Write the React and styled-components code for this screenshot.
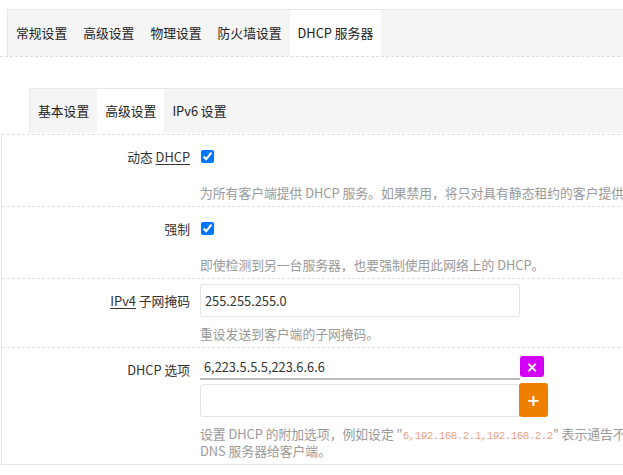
import React from "react";
import styled, { createGlobalStyle } from "styled-components";

const GlobalStyle = createGlobalStyle`
  html, body {
    margin: 0;
    padding: 0;
    overflow: hidden;
    background: #fff;
  }
  body {
    font-family: "Noto Sans CJK SC", "Noto Sans", sans-serif;
    font-size: 12.8px;
    color: #333;
  }
`;

const topTabs = ["常规设置", "高级设置", "物理设置", "防火墙设置", "DHCP 服务器"];
const subTabs = ["基本设置", "高级设置", "IPv6 设置"];

export default function App() {
  return (
    <>
      <GlobalStyle />
      <StyledPage>
        <StyledTopSection>
          <StyledTabBar>
            {topTabs.map((name, i) => (
              <StyledTab key={name} $active={i === topTabs.length - 1} $height={46}>
                {name}
              </StyledTab>
            ))}
          </StyledTabBar>
        </StyledTopSection>

        <StyledSubSection>
          <StyledTabBar>
            {subTabs.map((name, i) => (
              <StyledTab key={name} $active={i === 1} $height={44}>
                {name}
              </StyledTab>
            ))}
          </StyledTabBar>
        </StyledSubSection>

        <StyledPanel>
          <StyledRow>
            <StyledLabel>
              动态 <StyledAbbr>DHCP</StyledAbbr>
            </StyledLabel>
            <StyledField>
              <StyledCheckArea>
                <StyledCheckbox type="checkbox" defaultChecked />
              </StyledCheckArea>
              <StyledHelp $nowrap>
                为所有客户端提供 DHCP 服务。如果禁用，将只对具有静态租约的客户提供服务。
              </StyledHelp>
            </StyledField>
          </StyledRow>

          <StyledRow>
            <StyledLabel>强制</StyledLabel>
            <StyledField>
              <StyledCheckArea>
                <StyledCheckbox type="checkbox" defaultChecked />
              </StyledCheckArea>
              <StyledHelp>即使检测到另一台服务器，也要强制使用此网络上的 DHCP。</StyledHelp>
            </StyledField>
          </StyledRow>

          <StyledRow>
            <StyledLabel>
              <StyledAbbr>IPv4</StyledAbbr> 子网掩码
            </StyledLabel>
            <StyledField>
              <StyledInput defaultValue="255.255.255.0" />
              <StyledHelp>重设发送到客户端的子网掩码。</StyledHelp>
            </StyledField>
          </StyledRow>

          <StyledRow>
            <StyledLabel>DHCP 选项</StyledLabel>
            <StyledField>
              <StyledDynItem>
                <StyledDynValue defaultValue="6,223.5.5.5,223.6.6.6" />
                <StyledRemoveButton>×</StyledRemoveButton>
              </StyledDynItem>
              <StyledDynAdd>
                <StyledInput />
                <StyledAddButton>+</StyledAddButton>
              </StyledDynAdd>
              <StyledHelp>
                设置 DHCP 的附加选项，例如设定 "<StyledCode>6,192.168.2.1,192.168.2.2</StyledCode>"
                表示通告不同的 DNS 服务器给客户端。
              </StyledHelp>
            </StyledField>
          </StyledRow>
        </StyledPanel>
      </StyledPage>
    </>
  );
}

const StyledPage = styled.div`
  width: 720px;
`;

const StyledTopSection = styled.div`
  padding: 9px 0 0 7px;
  border-bottom: 1px dashed #ddd;
`;

const StyledSubSection = styled.div`
  padding: 31px 0 0 29px;
`;

const StyledTabBar = styled.div`
  display: flex;
  background: #f5f5f5;
  border-top: 1px solid #e6e6e6;
  border-left: 1px solid #e6e6e6;
`;

const StyledTab = styled.div`
  padding: 0 8px;
  line-height: ${(p) => p.$height}px;
  color: #222;
  white-space: nowrap;
  background: ${(p) => (p.$active ? "#fff" : "transparent")};
`;

const StyledPanel = styled.div`
  margin: 1px 0 0 1px;
  border-left: 1px solid #e3e6e9;
  border-bottom: 1px solid #e3e6e9;
`;

const StyledRow = styled.div`
  display: flex;
  padding: 5px 0;
  border-top: 1px dashed #e0e0e0;
`;

const StyledLabel = styled.div`
  width: 188px;
  margin-right: 10px;
  text-align: right;
  line-height: 33px;
  color: #333;
  white-space: nowrap;
`;

const StyledAbbr = styled.span`
  text-decoration: underline;
  text-underline-offset: 2px;
`;

const StyledField = styled.div`
  display: flex;
  flex-direction: column;
  width: 468px;
`;

const StyledCheckArea = styled.div`
  display: flex;
  height: 36px;
  padding-top: 10px;
  box-sizing: border-box;
`;

const StyledCheckbox = styled.input`
  width: 13px;
  height: 13px;
  margin: 0 0 0 1px;
  accent-color: #0075ff;
`;

const StyledInput = styled.input`
  box-sizing: border-box;
  width: 320px;
  height: 33px;
  padding: 0 4px;
  border: 1px solid #e4e4e4;
  border-radius: 3px;
  font: inherit;
  color: #333;
  outline: none;
`;

const StyledHelp = styled.div`
  margin-top: 8px;
  line-height: 17px;
  color: #999;
  white-space: ${(p) => (p.$nowrap ? "nowrap" : "normal")};
`;

const StyledCode = styled.code`
  font-family: "Liberation Mono", monospace;
  font-size: 11px;
  line-height: 1;
  letter-spacing: -0.6px;
  color: #f0a07c;
`;

const StyledDynItem = styled.div`
  display: flex;
  align-items: flex-start;
`;

const StyledDynValue = styled.input`
  box-sizing: border-box;
  width: 320px;
  height: 27px;
  padding: 2px 4px 0;
  border: none;
  border-bottom: 2px solid #bbb;
  font: inherit;
  color: #333;
  background: transparent;
  outline: none;
`;

const StyledRemoveButton = styled.div`
  display: flex;
  align-items: center;
  justify-content: center;
  width: 24px;
  height: 21px;
  margin-top: 3px;
  border-radius: 3px;
  background: #d300f5;
  color: #fff;
  font-family: "DejaVu Sans", sans-serif;
  font-size: 14px;
  font-weight: bold;
`;

const StyledDynAdd = styled.div`
  display: flex;
  align-items: flex-start;
  margin-top: 4px;
`;

const StyledAddButton = styled.div`
  display: flex;
  align-items: center;
  justify-content: center;
  width: 29px;
  height: 34px;
  margin: -1px 0 0 -1px;
  border-radius: 3px;
  background: #ef7f00;
  color: #fff;
  font-family: "DejaVu Sans", sans-serif;
  font-size: 16px;
  font-weight: bold;
`;
